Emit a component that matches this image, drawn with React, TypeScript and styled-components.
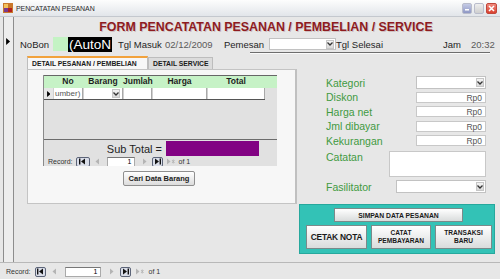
import styled, { createGlobalStyle } from "styled-components";

const GlobalStyle = createGlobalStyle`
  html, body { margin: 0; padding: 0; background: #e7e7e7; }
  body { font-family: "Liberation Sans", Arial, sans-serif; }
`;

const columns = [
  { key: "sel", label: "", width: 9 },
  { key: "no", label: "No", width: 30 },
  { key: "barang", label: "Barang", width: 40 },
  { key: "jumlah", label: "Jumlah", width: 29 },
  { key: "harga", label: "Harga", width: 55 },
  { key: "total", label: "Total", width: 58 },
];
const gridCols = columns.map((c) => `${c.width}px`).join(" ");

const moneyFields = ["Diskon", "Harga net", "Jml dibayar", "Kekurangan"];

const Arrow = ({ size = 7 }: { size?: number }) => (
  <svg width={size * 0.6} height={size} viewBox="0 0 4 7">
    <path d="M0 0 L4 3.5 L0 7 Z" fill="#000" />
  </svg>
);

const Chevron = () => (
  <svg width="6" height="4" viewBox="0 0 6 4">
    <path d="M0.5 0.5 L3 3 L5.5 0.5" stroke="#333" strokeWidth="1.3" fill="none" />
  </svg>
);

type NavIconKind = "first" | "prev" | "next" | "last" | "new";

const NavIcon = ({ kind, off }: { kind: NavIconKind; off?: boolean }) => {
  const c = off ? "#b4b4b4" : "#111";
  return (
    <svg width="9" height="7" viewBox="0 0 9 7">
      {kind === "first" && (
        <>
          <rect x="1" y="0.5" width="1.4" height="6" fill={c} />
          <path d="M7 0.5 L3 3.5 L7 6.5 Z" fill={c} />
        </>
      )}
      {kind === "prev" && <path d="M6 0.5 L2.5 3.5 L6 6.5 Z" fill={c} />}
      {kind === "next" && <path d="M3 0.5 L6.5 3.5 L3 6.5 Z" fill={c} />}
      {kind === "last" && (
        <>
          <path d="M2 0.5 L6 3.5 L2 6.5 Z" fill={c} />
          <rect x="6.6" y="0.5" width="1.4" height="6" fill={c} />
        </>
      )}
      {kind === "new" && (
        <>
          <path d="M1 0.5 L4.5 3.5 L1 6.5 Z" fill={c} />
          <path d="M6 2 L8.6 5 M8.6 2 L6 5 M7.3 1.5 L7.3 5.5" stroke={c} strokeWidth="0.8" />
        </>
      )}
    </svg>
  );
};

const RecordNav = ({ compact, inputWidth }: { compact?: boolean; inputWidth: number }) => (
  <NavBar $compact={compact}>
    <NavLabel>Record:</NavLabel>
    <NavButton $boxed $wide={compact}>
      <NavIcon kind="first" />
    </NavButton>
    <NavButton>
      <NavIcon kind="prev" off />
    </NavButton>
    <NavInput style={{ width: inputWidth }}>1</NavInput>
    <NavButton>
      <NavIcon kind="next" off />
    </NavButton>
    <NavButton $boxed>
      <NavIcon kind="last" />
    </NavButton>
    <NavButton>
      <NavIcon kind="new" off />
    </NavButton>
    <NavLabel>of 1</NavLabel>
  </NavBar>
);

const App = () => {
  return (
    <>
      <GlobalStyle />
      <Window>
        <TitleBar>
          <svg width="10" height="10" viewBox="0 0 10 10">
            <rect x="0" y="0" width="10" height="10" fill="#c9782c" />
            <rect x="1" y="1" width="4" height="4" fill="#f2c25a" />
            <rect x="5" y="5" width="4" height="4" fill="#b3201c" />
            <rect x="1" y="5" width="4" height="4" fill="#7a3a8c" />
          </svg>
          <TitleText>PENCATATAN PESANAN</TitleText>
          <WinButtons>
            <WinButton $kind="min">
              <svg width="6" height="6" viewBox="0 0 6 6">
                <rect x="1" y="4" width="4" height="1.5" fill="#fff" />
              </svg>
            </WinButton>
            <WinButton $kind="max" />
            <WinButton $kind="close">
              <svg width="7" height="7" viewBox="0 0 7 7">
                <path d="M1 1 L6 6 M6 1 L1 6" stroke="#fff" strokeWidth="1.5" />
              </svg>
            </WinButton>
          </WinButtons>
        </TitleBar>

        <Body>
          <SelectorColumn>
            <Arrow />
          </SelectorColumn>
          <Main>
            <FormTitle>FORM PENCATATAN PESANAN / PEMBELIAN / SERVICE</FormTitle>

            <HeaderRow>
              <Text $w={33} $ml={6}>NoBon</Text>
              <GreenBox />
              <AutoBox>(AutoN</AutoBox>
              <Text $w={47} $ml={6}>Tgl Masuk</Text>
              <Text $w={59} $muted>02/12/2009</Text>
              <Text $w={45}>Pemesan</Text>
              <Select $w={67} $h={12}>
                <ArrowBox>
                  <Chevron />
                </ArrowBox>
              </Select>
              <Text $w={60}>Tgl Selesai</Text>
              <Text $ml={47}>Jam</Text>
              <Text $ml={10} $muted>20:32</Text>
            </HeaderRow>
            <Divider />

            <Content>
              <LeftPane>
                <Tabs>
                  <Tab $active>DETAIL PESANAN / PEMBELIAN</Tab>
                  <Tab>DETAIL SERVICE</Tab>
                </Tabs>
                <Panel>
                  <Subform>
                    <GridHeader>
                      {columns.map((c) => (
                        <HeadCell key={c.key}>{c.label}</HeadCell>
                      ))}
                    </GridHeader>
                    <GridRow>
                      <RowSelector>
                        <Arrow size={6} />
                      </RowSelector>
                      <Cell>umber)</Cell>
                      <Cell $combo>
                        <ArrowBox>
                          <Chevron />
                        </ArrowBox>
                      </Cell>
                      <Cell />
                      <Cell />
                      <Cell />
                    </GridRow>
                    <GridSpace />
                    <SubFooter>
                      <SubTotalLabel>Sub Total =</SubTotalLabel>
                      <PurpleBox />
                    </SubFooter>
                    <RecordNav compact inputWidth={28} />
                  </Subform>
                  <SmallButton>Cari Data Barang</SmallButton>
                </Panel>
              </LeftPane>

              <RightPane>
                <FieldRow $h={15}>
                  <FieldLabel>Kategori</FieldLabel>
                  <Select $w={70} $h={13}>
                    <ArrowBox>
                      <Chevron />
                    </ArrowBox>
                  </Select>
                </FieldRow>
                {moneyFields.map((f) => (
                  <FieldRow key={f} $h={14.5}>
                    <FieldLabel>{f}</FieldLabel>
                    <MoneyInput>Rp0</MoneyInput>
                  </FieldRow>
                ))}
                <FieldRow $h={26} $top $mt={3}>
                  <FieldLabel>Catatan</FieldLabel>
                  <Memo />
                </FieldRow>
                <FieldRow $h={13} $mt={3}>
                  <FieldLabel>Fasilitator</FieldLabel>
                  <Select $w={90} $h={13}>
                    <ArrowBox>
                      <Chevron />
                    </ArrowBox>
                  </Select>
                </FieldRow>

                <ActionPanel>
                  <SaveButton>SIMPAN DATA PESANAN</SaveButton>
                  <ActionRow>
                    <ActionButton $w={61} $big>CETAK NOTA</ActionButton>
                    <ActionButton $w={60}>
                      CATAT
                      <br />
                      PEMBAYARAN
                    </ActionButton>
                    <ActionButton $w={57}>
                      TRANSAKSI
                      <br />
                      BARU
                    </ActionButton>
                  </ActionRow>
                </ActionPanel>
              </RightPane>
            </Content>
          </Main>
        </Body>

        <BottomBar>
          <RecordNav inputWidth={36} />
        </BottomBar>
      </Window>
    </>
  );
};

export default App;

const Window = styled.div`
  width: 500px;
  height: 279px;
  display: flex;
  flex-direction: column;
  background: #e7e7e7;
  overflow: hidden;
  font-family: "Liberation Sans", Arial, sans-serif;
`;

const TitleBar = styled.div`
  height: 17px;
  box-sizing: border-box;
  display: flex;
  align-items: center;
  padding: 0 3px;
  background: linear-gradient(#fdfdfd, #e2e5ea);
  border-bottom: 1px solid #c4c8ce;
`;

const TitleText = styled.span`
  margin-left: 3px;
  font-size: 7px;
  color: #2b2b2b;
  letter-spacing: -0.1px;
`;

const WinButtons = styled.div`
  margin-left: auto;
  display: flex;
  gap: 2px;
`;

const WinButton = styled.div<{ $kind: "min" | "max" | "close" }>`
  width: ${(p) => (p.$kind === "close" ? 11 : 10)}px;
  height: 11px;
  border-radius: 2px;
  display: flex;
  align-items: center;
  justify-content: center;
  background: ${(p) =>
    p.$kind === "close"
      ? "linear-gradient(#f08a7e, #d9402f)"
      : p.$kind === "min"
      ? "linear-gradient(#c5cbe6, #8e97c4)"
      : "linear-gradient(#eeeeee, #cfcfcf)"};
  border: 1px solid ${(p) => (p.$kind === "close" ? "#c0463a" : "#b9bccb")};
  box-sizing: border-box;
`;

const Body = styled.div`
  flex: 1;
  display: flex;
  min-height: 0;
`;

const SelectorColumn = styled.div`
  width: 11px;
  margin-left: 3px;
  box-sizing: border-box;
  border-left: 1px solid #8d8d8d;
  border-right: 1px solid #8d8d8d;
  background: #ededed;
  padding-top: 21px;
  display: flex;
  justify-content: center;
  align-items: flex-start;
`;

const Main = styled.div`
  flex: 1;
  display: flex;
  flex-direction: column;
`;

const FormTitle = styled.h1`
  margin: 0;
  height: 19px;
  line-height: 20px;
  padding-left: 18px;
  text-align: center;
  font-size: 12.4px;
  font-weight: bold;
  color: #8e1b1f;
  text-shadow: 1px 1px 0 rgba(90, 0, 0, 0.18);
`;

const HeaderRow = styled.div`
  height: 16px;
  display: flex;
  align-items: center;
`;

const Text = styled.span<{ $w?: number; $ml?: number; $muted?: boolean }>`
  ${(p) => (p.$w ? `width: ${p.$w}px;` : "")}
  margin-left: ${(p) => p.$ml ?? 0}px;
  flex-shrink: 0;
  font-size: 9.5px;
  color: ${(p) => (p.$muted ? "#5a5a5a" : "#1e1e1e")};
  white-space: nowrap;
`;

const GreenBox = styled.div`
  width: 15px;
  height: 14px;
  background: #c4f3c4;
  flex-shrink: 0;
`;

const AutoBox = styled.div`
  width: 44px;
  height: 15px;
  flex-shrink: 0;
  background: #000;
  color: #fff;
  font-size: 13.5px;
  line-height: 15px;
  padding-left: 1px;
  box-sizing: border-box;
  overflow: hidden;
  white-space: nowrap;
`;

const Select = styled.div<{ $w: number; $h: number }>`
  width: ${(p) => p.$w}px;
  height: ${(p) => p.$h}px;
  flex-shrink: 0;
  box-sizing: border-box;
  background: #fff;
  border: 1px solid #c2c2c2;
  display: flex;
  justify-content: flex-end;
  align-items: center;
  padding-right: 1px;
`;

const ArrowBox = styled.div`
  width: 8px;
  height: 9px;
  display: flex;
  align-items: center;
  justify-content: center;
  background: linear-gradient(#f4f4f4, #d8d8d8);
  border: 1px solid #c6c6c6;
  box-sizing: border-box;
`;

const Divider = styled.div`
  margin-left: 236px;
  width: 240px;
  border-top: 1px solid #6e6e6e;
  border-bottom: 1px solid #fafafa;
`;

const Content = styled.div`
  flex: 1;
  display: flex;
`;

const LeftPane = styled.div`
  margin-left: 13px;
  width: 270px;
  display: flex;
  flex-direction: column;
`;

const Tabs = styled.div`
  margin-top: 2px;
  height: 13px;
  display: flex;
  align-items: flex-end;
`;

const Tab = styled.div<{ $active?: boolean }>`
  box-sizing: border-box;
  height: ${(p) => (p.$active ? 13 : 12)}px;
  width: ${(p) => (p.$active ? 121 : 65)}px;
  padding-left: 4px;
  display: flex;
  align-items: center;
  font-size: 6.8px;
  font-weight: bold;
  color: #1a1a1a;
  white-space: nowrap;
  background: ${(p) => (p.$active ? "#f7f7f7" : "#dcdcdc")};
  border: 1px solid #bdbdbd;
  border-bottom: none;
  border-top: ${(p) => (p.$active ? "2px solid #f2a23c" : "1px solid #bdbdbd")};
`;

const Panel = styled.div`
  height: 135px;
  box-sizing: border-box;
  background: #f7f7f7;
  border: 1px solid #c4c4c4;
  border-right: 2px solid #c0c0c0;
  padding: 5px 0 0 15px;
  display: flex;
  flex-direction: column;
`;

const Subform = styled.div`
  width: 234px;
  height: 91px;
  box-sizing: border-box;
  background: #e1e1e1;
  border-left: 1px solid #8a8a8a;
  display: flex;
  flex-direction: column;
`;

const GridHeader = styled.div`
  height: 13px;
  box-sizing: border-box;
  display: grid;
  grid-template-columns: ${gridCols};
  background: #c6f2c6;
  border-top: 1px solid #666;
`;

const HeadCell = styled.div`
  font-size: 8.5px;
  font-weight: bold;
  color: #1e1e1e;
  text-align: center;
  line-height: 11px;
`;

const GridRow = styled.div`
  height: 12px;
  box-sizing: border-box;
  display: grid;
  grid-template-columns: ${gridCols};
  border-bottom: 1px solid #555;
  width: 221px;
`;

const RowSelector = styled.div`
  display: flex;
  align-items: center;
  justify-content: center;
  background: #e6e6e6;
`;

const Cell = styled.div<{ $combo?: boolean }>`
  background: #fff;
  border-right: 1px solid #a8a8a8;
  border-left: 1px solid #d0d0d0;
  font-size: 8px;
  color: #555;
  line-height: 11px;
  padding-left: 1px;
  display: flex;
  align-items: center;
  justify-content: ${(p) => (p.$combo ? "flex-end" : "flex-start")};
  padding-right: ${(p) => (p.$combo ? 2 : 0)}px;
  overflow: hidden;
`;

const GridSpace = styled.div`
  flex: 1;
`;

const SubFooter = styled.div`
  height: 18px;
  box-sizing: border-box;
  border-top: 1px solid #6c6c6c;
  display: flex;
  align-items: center;
  justify-content: flex-end;
  padding-right: 18px;
  gap: 4px;
`;

const SubTotalLabel = styled.span`
  font-size: 11px;
  color: #1e1e1e;
`;

const PurpleBox = styled.div`
  width: 93px;
  height: 15px;
  background: #820283;
`;

const NavBar = styled.div<{ $compact?: boolean }>`
  height: ${(p) => (p.$compact ? 9 : 11)}px;
  display: flex;
  align-items: center;
  gap: ${(p) => (p.$compact ? 2 : 3)}px;
  padding-left: ${(p) => (p.$compact ? 3 : 0)}px;
  overflow: hidden;
`;

const NavLabel = styled.span`
  font-size: 7px;
  color: #333;
  padding: 0 1px;
`;

const NavButton = styled.div<{ $boxed?: boolean; $wide?: boolean }>`
  width: ${(p) => (p.$wide ? 14 : 11)}px;
  height: 10px;
  box-sizing: border-box;
  display: flex;
  align-items: center;
  justify-content: center;
  border: 1px solid ${(p) => (p.$boxed ? "#5c6478" : "transparent")};
  border-radius: 2px;
  background: ${(p) => (p.$boxed ? "#d9dde8" : "transparent")};
`;

const NavInput = styled.div`
  height: 10px;
  box-sizing: border-box;
  background: #fff;
  border: 1px solid #aaa;
  border-top-color: #777;
  font-size: 7px;
  line-height: 8px;
  text-align: right;
  padding-right: 2px;
  margin: 0 2px;
`;

const SmallButton = styled.div`
  margin: 5px 0 0 80px;
  width: 72px;
  height: 15px;
  box-sizing: border-box;
  border: 1px solid #8f8f8f;
  border-radius: 2px;
  background: linear-gradient(#ffffff, #dcdcdc);
  font-size: 7.5px;
  font-weight: bold;
  color: #222;
  display: flex;
  align-items: center;
  justify-content: center;
  white-space: nowrap;
`;

const RightPane = styled.div`
  margin-left: 2px;
  width: 196px;
  display: flex;
  flex-direction: column;
  padding-top: 21px;
`;

const FieldRow = styled.div<{ $h: number; $top?: boolean; $mt?: number }>`
  height: ${(p) => p.$h}px;
  margin-top: ${(p) => p.$mt ?? 0}px;
  display: flex;
  align-items: ${(p) => (p.$top ? "flex-start" : "center")};
  justify-content: space-between;
  padding: 0 9px 0 27px;
`;

const FieldLabel = styled.span`
  font-size: 10.5px;
  color: #3f9a42;
  white-space: nowrap;
`;

const MoneyInput = styled.div`
  width: 70px;
  height: 11px;
  box-sizing: border-box;
  background: #fff;
  border: 1px solid #c8c8c8;
  font-size: 8.5px;
  line-height: 10px;
  color: #555;
  text-align: right;
  padding-right: 3px;
`;

const Memo = styled.div`
  width: 97px;
  height: 26px;
  box-sizing: border-box;
  background: #fff;
  border: 1px solid #c8c8c8;
`;

const ActionPanel = styled.div`
  margin-top: 11px;
  height: 50px;
  box-sizing: border-box;
  background: #33c2b6;
  border: 1px solid #26a89d;
  display: flex;
  flex-direction: column;
  padding-top: 3px;
`;

const SaveButton = styled.div`
  margin-left: 34px;
  width: 129px;
  height: 14px;
  box-sizing: border-box;
  border: 1px solid #7b8a8a;
  background: linear-gradient(#ffffff, #d9dcdc);
  font-size: 6.8px;
  font-weight: bold;
  color: #1a1a1a;
  display: flex;
  align-items: center;
  justify-content: center;
`;

const ActionRow = styled.div`
  margin-top: 3px;
  display: flex;
  gap: 4px;
  padding-left: 6px;
`;

const ActionButton = styled.div<{ $w: number; $big?: boolean }>`
  width: ${(p) => p.$w}px;
  height: 24px;
  box-sizing: border-box;
  border: 1px solid #7b8a8a;
  background: linear-gradient(#ffffff, #d9dcdc);
  font-size: ${(p) => (p.$big ? 8.4 : 6.6)}px;
  line-height: 8px;
  font-weight: bold;
  color: #1a1a1a;
  text-align: center;
  display: flex;
  align-items: center;
  justify-content: center;
  letter-spacing: ${(p) => (p.$big ? -0.2 : 0)}px;
`;

const BottomBar = styled.div`
  height: 17px;
  box-sizing: border-box;
  border-top: 1px solid #b8b8b8;
  padding: 3px 0 0 5px;
  background: #e7e7e7;
`;
